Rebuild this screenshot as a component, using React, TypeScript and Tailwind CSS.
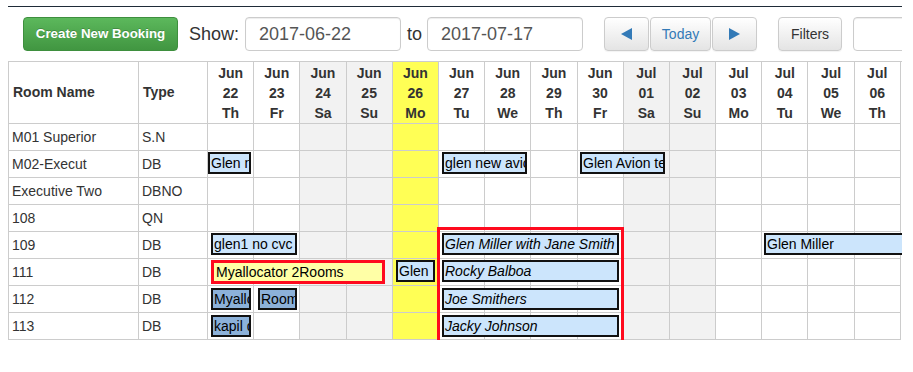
import React from "react";

type Col = { m: string; d: string; w: string; kind: "weekend" | "today" | "normal" };

const cols: Col[] = [
  { m: "Jun", d: "22", w: "Th", kind: "normal" },
  { m: "Jun", d: "23", w: "Fr", kind: "normal" },
  { m: "Jun", d: "24", w: "Sa", kind: "weekend" },
  { m: "Jun", d: "25", w: "Su", kind: "weekend" },
  { m: "Jun", d: "26", w: "Mo", kind: "today" },
  { m: "Jun", d: "27", w: "Tu", kind: "normal" },
  { m: "Jun", d: "28", w: "We", kind: "normal" },
  { m: "Jun", d: "29", w: "Th", kind: "normal" },
  { m: "Jun", d: "30", w: "Fr", kind: "normal" },
  { m: "Jul", d: "01", w: "Sa", kind: "weekend" },
  { m: "Jul", d: "02", w: "Su", kind: "weekend" },
  { m: "Jul", d: "03", w: "Mo", kind: "normal" },
  { m: "Jul", d: "04", w: "Tu", kind: "normal" },
  { m: "Jul", d: "05", w: "We", kind: "normal" },
  { m: "Jul", d: "06", w: "Th", kind: "normal" },
];

const rooms = [
  ["M01 Superior", "S.N"],
  ["M02-Execut", "DB"],
  ["Executive Two", "DBNO"],
  ["108", "QN"],
  ["109", "DB"],
  ["111", "DB"],
  ["112", "DB"],
  ["113", "DB"],
];

type Booking = {
  text: string;
  left: number;
  top: number;
  width: number;
  height: number;
  variant: "light" | "dark" | "yellow";
  italic?: boolean;
};

const bookings: Booking[] = [
  { text: "Glen new avion", left: 199, top: 90, width: 43, height: 22, variant: "light" },
  { text: "glen new avion test", left: 433, top: 90, width: 85, height: 22, variant: "light" },
  { text: "Glen Avion test", left: 571, top: 90, width: 85, height: 22, variant: "light" },
  { text: "glen1 no cvc", left: 202, top: 171, width: 86, height: 22, variant: "light" },
  { text: "Glen Miller with Jane Smith", left: 433, top: 171, width: 177, height: 22, variant: "light", italic: true },
  { text: "Glen Miller", left: 755, top: 171, width: 200, height: 22, variant: "light" },
  { text: "Myallocator 2Rooms", left: 202, top: 198, width: 174, height: 24, variant: "yellow" },
  { text: "Glen Miller", left: 387, top: 198, width: 39, height: 22, variant: "light" },
  { text: "Rocky Balboa", left: 433, top: 198, width: 177, height: 22, variant: "light", italic: true },
  { text: "Myallocator 2Rooms", left: 202, top: 226, width: 40, height: 22, variant: "dark" },
  { text: "Rooms 2", left: 249, top: 226, width: 39, height: 22, variant: "dark" },
  { text: "Joe Smithers", left: 433, top: 226, width: 177, height: 22, variant: "light", italic: true },
  { text: "kapil dev", left: 202, top: 253, width: 40, height: 22, variant: "dark" },
  { text: "Jacky Johnson", left: 433, top: 253, width: 177, height: 22, variant: "light", italic: true },
];

function colBg(kind: Col["kind"]) {
  if (kind === "weekend") return "bg-[#f2f2f2]";
  if (kind === "today") return "bg-[#ffff55]";
  return "bg-white";
}

function bookingClass(b: Booking) {
  const base =
    "absolute flex items-center overflow-hidden whitespace-nowrap text-[14px] leading-[16px] text-black ";
  if (b.variant === "yellow") return base + "bg-[#ffffa6] border-[3px] border-[#ff0a1e] pl-[2px]";
  if (b.variant === "dark") return base + "bg-[#8cb1d9] border-2 border-[#111] pl-[1px]";
  return base + "bg-[#cce5fc] border-2 border-[#111] pl-[1px]";
}

function Tri({ dir }: { dir: "left" | "right" }) {
  return (
    <svg width="11" height="12" viewBox="0 0 11 12">
      {dir === "left" ? (
        <polygon points="11,0 11,12 0,6" fill="#337ab7" />
      ) : (
        <polygon points="0,0 0,12 11,6" fill="#337ab7" />
      )}
    </svg>
  );
}

export default function App() {
  const grayBtn =
    "h-[34px] flex items-center justify-center rounded-[4px] border border-[#ccc] bg-linear-to-b from-[#ffffff] to-[#e4e4e4] text-[14px] shadow-[0_1px_1px_rgba(0,0,0,0.05)]";
  const input =
    "h-[34px] rounded-[4px] border border-[#ccc] bg-white pl-[13px] flex items-center text-[18px] text-[#555] shadow-[inset_0_1px_1px_rgba(0,0,0,0.075)]";

  return (
    <div className="w-[913px] h-[372px] bg-white font-['Liberation_Sans',Arial,sans-serif] text-[#333] overflow-hidden">
      <div className="ml-[8px] mt-[6px] w-[894px] overflow-hidden border-t border-[#1f2b38]">
        {/* toolbar */}
        <div className="flex items-center pt-[10px] pl-[15px] h-[44px] box-border whitespace-nowrap">
          <div className="h-[34px] w-[155px] shrink-0 flex items-center justify-center rounded-[4px] border border-[#3e8f3e] bg-linear-to-b from-[#5cb85c] to-[#419641] text-white font-bold text-[13.3px] [text-shadow:0_-1px_0_rgba(0,0,0,0.2)]">
            Create New Booking
          </div>
          <span className="ml-[11px] text-[18px] text-[#333]">Show:</span>
          <div className={input + " ml-[6px] w-[156px] shrink-0"}>2017-06-22</div>
          <span className="ml-[6px] text-[18px] text-[#333]">to</span>
          <div className={input + " ml-[5px] w-[156px] shrink-0"}>2017-07-17</div>
          <div className="ml-[21px] flex gap-[1px] shrink-0">
            <div className={grayBtn + " w-[45px]"}>
              <Tri dir="left" />
            </div>
            <div className={grayBtn + " w-[61px] text-[#337ab7]"}>Today</div>
            <div className={grayBtn + " w-[45px]"}>
              <Tri dir="right" />
            </div>
          </div>
          <div className={grayBtn + " ml-[21px] w-[64px] shrink-0 text-[#333]"}>Filters</div>
          <div className={input + " ml-[11px] w-[200px] shrink-0"}></div>
        </div>

        {/* table */}
        <div className="mt-[10px] relative w-[894px] overflow-hidden border-l border-t border-[#ccc]">
          <div className="grid grid-cols-[130px_69px_repeat(15,46.2px)]">
            {/* header */}
            <div className="h-[62px] border-r border-b border-[#ccc] flex items-center pl-[4px] font-bold text-[14px]">
              Room Name
            </div>
            <div className="h-[62px] border-r border-b border-[#ccc] flex items-center pl-[4px] font-bold text-[14px]">
              Type
            </div>
            {cols.map((c, i) => (
              <div
                key={"h" + i}
                className={
                  "h-[62px] border-r border-b border-[#ccc] flex flex-col items-center justify-center font-bold text-[14px] leading-[20px] " +
                  colBg(c.kind)
                }
              >
                <span>{c.m}</span>
                <span>{c.d}</span>
                <span>{c.w}</span>
              </div>
            ))}

            {/* body */}
            {rooms.map((r, ri) => (
              <React.Fragment key={"r" + ri}>
                <div className="h-[27px] border-r border-b border-[#ccc] flex items-center pl-[3px] text-[14px] whitespace-nowrap overflow-hidden">
                  {r[0]}
                </div>
                <div className="h-[27px] border-r border-b border-[#ccc] flex items-center pl-[3px] text-[14px]">
                  {r[1]}
                </div>
                {cols.map((c, ci) => (
                  <div
                    key={"c" + ri + "-" + ci}
                    className={"h-[27px] border-r border-b border-[#ccc] " + colBg(c.kind)}
                  />
                ))}
              </React.Fragment>
            ))}
          </div>

          {/* bookings overlay */}
          {bookings.map((b, i) => (
            <div
              key={"b" + i}
              className={bookingClass(b) + (b.italic ? " italic" : "")}
              style={{ left: b.left, top: b.top, width: b.width, height: b.height }}
            >
              {b.text}
            </div>
          ))}
          <div className="absolute left-[428px] top-[165px] w-[187px] h-[160px] border-[3px] border-[#ff0a1e] pointer-events-none" />
        </div>
      </div>
    </div>
  );
}
